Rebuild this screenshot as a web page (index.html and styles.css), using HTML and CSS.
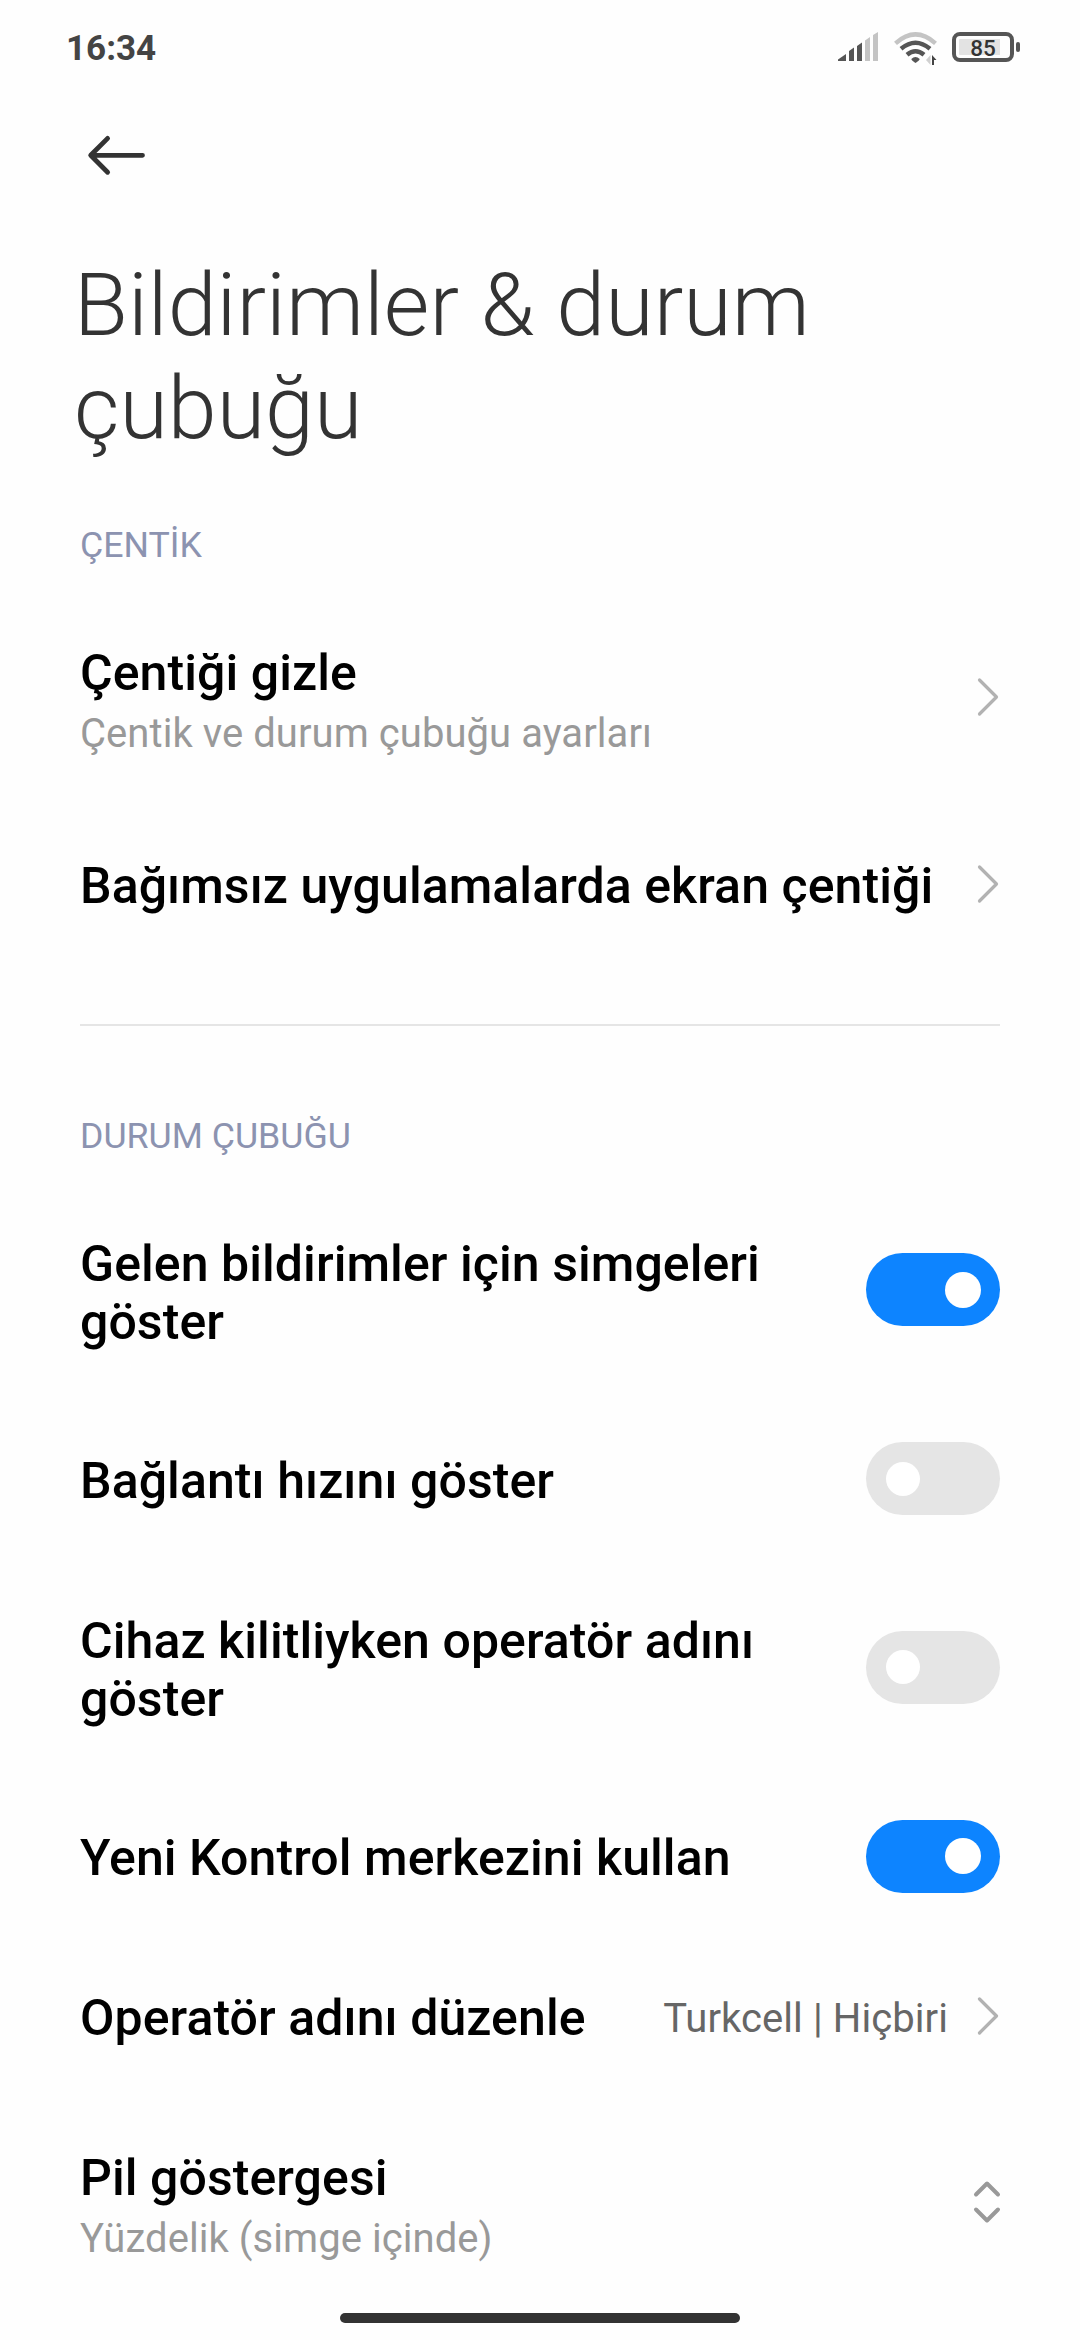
FILE: index.html
```html
<!DOCTYPE html>
<html lang="tr">
<head>
<meta charset="utf-8">
<title>Bildirimler &amp; durum çubuğu</title>
<link rel="stylesheet" href="styles.css">
</head>
<body>
<svg class="defs" aria-hidden="true">
  <symbol id="chevron" viewBox="0 0 22 40"><path d="M2.500 3 L19.500 20 L2.500 37" fill="none" stroke="#b2b2b2" stroke-width="3.200" stroke-linecap="round" stroke-linejoin="round"/></symbol>
</svg>
<div class="screen">
  <header class="status-bar">
    <span class="clock">16:34</span>
    <div class="status-icons">
      <svg class="signal" width="41" height="30" viewBox="0 0 41 30">
        <path d="M0 29V27.500L8 22V29ZM11 29V19L16 15.500V29ZM19 29V14L24 10.500V29Z" fill="#555"/>
        <path d="M27 29V8.500L32 5V29ZM35 29V3L40 0V29Z" fill="#c4c4c4"/>
      </svg>
      <svg class="wifi" width="44" height="34" viewBox="0 0 44 34">
        <g fill="none" stroke-width="4.400">
          <path d="M1.500 11.300Q21.500 -6.600 41.500 11.300" stroke="#c4c4c4"/>
          <path d="M7 16.800Q21.500 4.600 36 16.800" stroke="#555"/>
          <path d="M13 22.800Q21.500 15.600 30 22.800" stroke="#555"/>
        </g>
        <path d="M17.300 27Q21.500 22.800 25.700 27Q25.500 28.500 21.500 31Q17.500 28.500 17.300 27Z" fill="#555"/>
        <path d="M36.500 23V33L32 28Z" fill="#d0d0d0"/><path d="M38 23L42.500 28H40V33H38Z" fill="#444"/>
      </svg>
      <div class="battery"><span class="battery-level">85</span></div>
    </div>
  </header>

  <nav class="toolbar">
    <svg width="60" height="42" viewBox="0 0 60 42"><path d="M21.600 4.400L4.700 21.300L21.600 38.200M5 21.300H56.500" fill="none" stroke="#333" stroke-width="4.800" stroke-linecap="round" stroke-linejoin="round"/></svg>
  </nav>

  <h1 class="page-title">Bildirimler &amp; durum çubuğu</h1>

  <main>
    <section class="group">
      <h2 class="group-title">ÇENTİK</h2>
      <div class="row row-detail">
        <div class="label"><div class="title">Çentiği gizle</div><div class="summary">Çentik ve durum çubuğu ayarları</div></div>
        <svg class="chevron"><use href="#chevron"/></svg>
      </div>
      <div class="row">
        <div class="label"><div class="title">Bağımsız uygulamalarda ekran çentiği</div></div>
        <svg class="chevron"><use href="#chevron"/></svg>
      </div>
    </section>
    <hr class="divider">
    <section class="group">
      <h2 class="group-title">DURUM ÇUBUĞU</h2>
      <div class="row row-tall">
        <div class="label"><div class="title">Gelen bildirimler için simgeleri göster</div></div>
        <div class="switch on"><i class="knob"></i></div>
      </div>
      <div class="row">
        <div class="label"><div class="title">Bağlantı hızını göster</div></div>
        <div class="switch"><i class="knob"></i></div>
      </div>
      <div class="row row-tall">
        <div class="label"><div class="title">Cihaz kilitliyken operatör adını göster</div></div>
        <div class="switch"><i class="knob"></i></div>
      </div>
      <div class="row">
        <div class="label"><div class="title">Yeni Kontrol merkezini kullan</div></div>
        <div class="switch on"><i class="knob"></i></div>
      </div>
      <div class="row">
        <div class="label"><div class="title">Operatör adını düzenle</div></div>
        <span class="value">Turkcell | Hiçbiri</span>
        <svg class="chevron"><use href="#chevron"/></svg>
      </div>
      <div class="row row-detail">
        <div class="label"><div class="title">Pil göstergesi</div><div class="summary">Yüzdelik (simge içinde)</div></div>
        <svg class="updown" width="28" height="44" viewBox="0 0 28 44"><path d="M3 14.500L14 3.500L25 14.500M3 29.500L14 40.500L25 29.500" fill="none" stroke="#999" stroke-width="4" stroke-linecap="round" stroke-linejoin="round"/></svg>
      </div>
    </section>
  </main>
  <div class="home-bar"></div>
</div>
</body>
</html>
```

FILE: styles.css
```css
* { box-sizing: border-box; margin: 0; }

body {
  background: #fefefe;
  font-family: Roboto, "Noto Sans", sans-serif;
  color: #000;
}

.defs { display: none; }

.screen {
  width: 1080px;
  height: 2340px;
  overflow: hidden;
  display: flex;
  flex-direction: column;
}

.status-bar {
  height: 96px;
  flex: none;
  display: flex;
  justify-content: space-between;
  padding: 0 60px 0 66px;
}

.clock {
  font-size: 35px;
  line-height: 41px;
  font-weight: 700;
  color: #444;
  padding-top: 28px;
}

.status-icons {
  display: flex;
  align-items: flex-start;
  padding-top: 32px;
}

.signal { margin-right: 15px; }
.wifi { margin-right: 14px; }

.battery {
  position: relative;
  width: 62px;
  height: 30px;
  margin-right: 6px;
  padding: 3px;
  border: 4px solid #555;
  border-radius: 8px;
  background: linear-gradient(90deg, #e3e3e3 41px, #fefefe 41px) content-box;
}

.battery::after {
  content: "";
  position: absolute;
  right: -10px;
  top: 6px;
  width: 4px;
  height: 10px;
  border-radius: 2px;
  background: #555;
}

.battery-level {
  display: block;
  margin-top: -3px;
  text-align: center;
  font-size: 22.5px;
  line-height: 24px;
  font-weight: 500;
  color: #333;
}

.toolbar {
  height: 157px;
  flex: none;
  padding: 38px 0 0 86px;
}

.page-title {
  padding: 0 74px;
  font-size: 88px;
  line-height: 103px;
  font-weight: 300;
  letter-spacing: 0.05px;
  color: #333;
}

.group { padding: 0 80px; }

.group-title {
  height: 131px;
  padding-top: 65px;
  font-size: 35.7px;
  line-height: 42px;
  font-weight: 400;
  color: #8c93b0;
}

.row {
  height: 160px;
  display: flex;
  align-items: center;
}

.row-detail { height: 214px; }
.row-detail:last-child { height: 212px; }
.row-tall { height: 217.5px; }

.label {
  flex: 1;
  padding-top: 4.5px;
}

.row-detail .label,
.row-tall .label { padding-top: 6px; }

.title {
  font-size: 50px;
  line-height: 58px;
  font-weight: 500;
  letter-spacing: 0.07px;
  white-space: nowrap;
}

.row-tall .title {
  max-width: 720px;
  white-space: normal;
}

.summary {
  margin-top: 8px;
  font-size: 40px;
  line-height: 47px;
  letter-spacing: 0.06px;
  color: #999;
}

.value {
  padding-top: 5px;
  font-size: 40px;
  line-height: 47px;
  letter-spacing: 0.08px;
  color: #666;
  margin-right: 29px;
}

.chevron {
  flex: none;
  width: 22px;
  height: 40px;
  margin-right: 1px;
}

.updown { flex: none; margin-right: -1px; }

.switch {
  flex: none;
  width: 134px;
  height: 73px;
  border-radius: 37px;
  padding: 0 20px;
  display: flex;
  align-items: center;
  background: #e5e5e5;
}

.switch.on {
  background: #0d84ff;
  justify-content: flex-end;
  padding-right: 19px;
}

.knob {
  width: 34px;
  height: 34px;
  border-radius: 50%;
  background: #fff;
}

.on .knob { width: 36px; height: 36px; }

.divider {
  height: 2px;
  border: 0;
  margin: 60px 80px 24px;
  background: #e5e5e5;
}

.home-bar {
  flex: none;
  width: 400px;
  height: 10px;
  margin: 5px auto 0;
  border-radius: 5px;
  background: #333;
}
```
